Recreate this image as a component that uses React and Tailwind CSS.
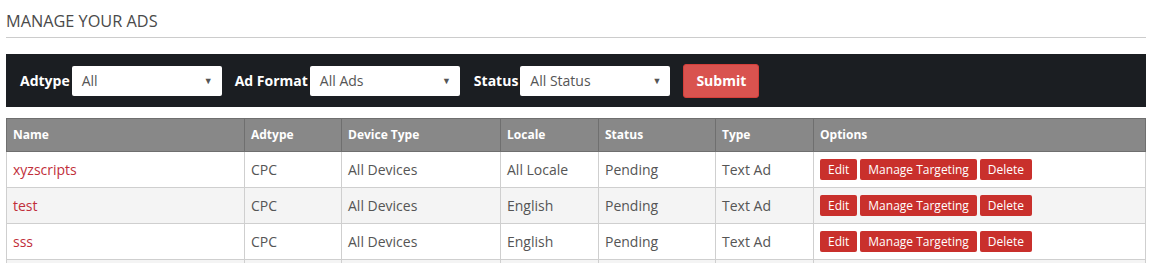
import React from 'react';

const rows = [
    { name: 'xyzscripts', adtype: 'CPC', device: 'All Devices', locale: 'All Locale', status: 'Pending', type: 'Text Ad' },
    { name: 'test', adtype: 'CPC', device: 'All Devices', locale: 'English', status: 'Pending', type: 'Text Ad' },
    { name: 'sss', adtype: 'CPC', device: 'All Devices', locale: 'English', status: 'Pending', type: 'Text Ad' },
];

const Select = ({ value }) => (
    <div className="w-[150px] h-[30px] bg-white rounded-[2px] flex items-center justify-between pl-[10px] pr-[9px] text-[14px] text-[#555]">
        <span>{value}</span>
        <span className="text-[9px] text-[#555]">▼</span>
    </div>
);

const App = () => {
    const cell = 'border border-[#cfcfcf] px-[6px] text-left';
    return (
        <div className="w-[1159px] h-[263px] overflow-hidden bg-white px-[6px] text-[#555]" style={{ fontFamily: '"Open Sans", sans-serif' }}>
            <h1 className="pt-[10px] text-[16.3px] leading-[22px] text-[#4a4a4a] uppercase">Manage Your Ads</h1>
            <div className="mt-[5px] w-[1140px] border-t border-[#cccccc]" />

            <div className="mt-[16px] w-[1140px] h-[53px] bg-[#1b1e22] flex items-center pl-[14px]">
                <span className="text-white font-bold text-[14px] mr-[2px]">Adtype</span>
                <Select value="All" />
                <span className="text-white font-bold text-[14px] ml-[13px] mr-[2px]">Ad Format</span>
                <Select value="All Ads" />
                <span className="text-white font-bold text-[14px] ml-[14px] mr-[2px]">Status</span>
                <Select value="All Status" />
                <button className="ml-[13px] w-[76px] h-[34px] bg-[#d9534f] border border-[#d43f3a] rounded-[3px] text-white font-bold text-[14px]">Submit</button>
            </div>

            <table className="mt-[11px] w-[1140px] border-collapse table-fixed">
                <colgroup>
                    <col className="w-[238px]" />
                    <col className="w-[97px]" />
                    <col className="w-[159px]" />
                    <col className="w-[98px]" />
                    <col className="w-[117px]" />
                    <col className="w-[98px]" />
                    <col />
                </colgroup>
                <thead>
                    <tr className="h-[33px] bg-[#888888] text-white text-[12px] font-bold">
                        {['Name', 'Adtype', 'Device Type', 'Locale', 'Status', 'Type', 'Options'].map((h) => (
                            <th key={h} className="border border-[#6f6f6f] px-[6px] text-left">{h}</th>
                        ))}
                    </tr>
                </thead>
                <tbody className="text-[14px]">
                    {rows.map((r, idx) => (
                        <tr key={idx} className={`h-[36px] ${idx % 2 === 1 ? 'bg-[#f4f4f4]' : 'bg-white'}`}>
                            <td className={`${cell} text-[#c12e3a]`}>{r.name}</td>
                            <td className={cell}>{r.adtype}</td>
                            <td className={cell}>{r.device}</td>
                            <td className={cell}>{r.locale}</td>
                            <td className={cell}>{r.status}</td>
                            <td className={cell}>{r.type}</td>
                            <td className={cell}>
                                <div className="flex gap-[3px]">
                                    <button className="h-[21px] px-[8px] bg-[#c9302c] rounded-[2px] text-white text-[12px]">Edit</button>
                                    <button className="h-[21px] px-[8px] bg-[#c9302c] rounded-[2px] text-white text-[12px]">Manage Targeting</button>
                                    <button className="h-[21px] px-[8px] bg-[#c9302c] rounded-[2px] text-white text-[12px]">Delete</button>
                                </div>
                            </td>
                        </tr>
                    ))}
                    <tr className="h-[36px] bg-[#f4f4f4]">
                        {[0, 1, 2, 3, 4, 5, 6].map((i) => (
                            <td key={i} className={cell}></td>
                        ))}
                    </tr>
                </tbody>
            </table>
        </div>
    );
};

export default App;
